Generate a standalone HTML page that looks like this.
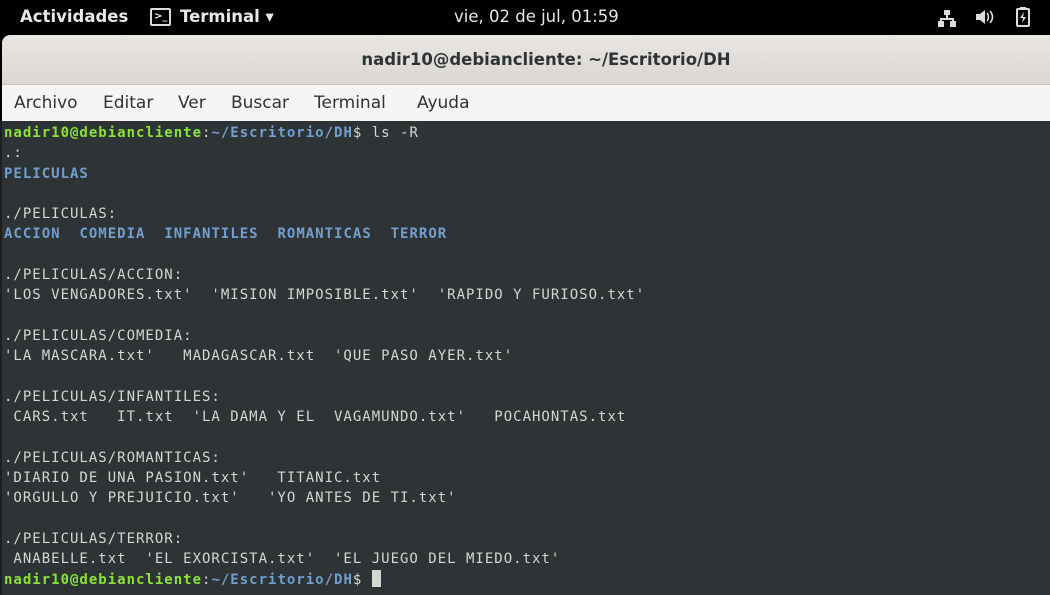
<!DOCTYPE html>
<html><head><meta charset="utf-8"><style>
*{margin:0;padding:0;box-sizing:border-box}
body{width:1050px;height:595px;overflow:hidden;background:#000;font-family:"DejaVu Sans","Liberation Sans",sans-serif;position:relative}
#top{position:absolute;left:0;top:0;width:1050px;height:35px;background:#000;color:#e8e8e8;font-size:16.5px;font-weight:bold}
#top span{position:absolute;top:7px}
#title{position:absolute;left:2px;top:35px;width:1048px;height:50px;background:linear-gradient(#e8e6e3,#dad7d2);border-top-left-radius:8px;border-bottom:1px solid #c9c4bc;text-align:center;font-size:16.5px;font-weight:bold;color:#2e3436;line-height:50px;padding-left:40px}
#menu{position:absolute;left:2px;top:85px;width:1048px;height:36px;background:#f6f5f4;font-size:17px;color:#2e3436}
#menu span{position:absolute;top:8px}
#term{position:absolute;left:0;top:121px;width:1050px;height:474px;background:#2e3436;border-left:2px solid #1d1f21;padding:2px 0 0 2px;font-family:"DejaVu Sans Mono","Liberation Mono",monospace;font-size:14px;letter-spacing:1px;line-height:20.3px;color:#d3d7cf;white-space:pre}
.g{color:#8ae234;font-weight:bold}.b{color:#729fcf;font-weight:bold}
.cur{display:inline-block;width:9px;height:17px;background:#d3d7cf;vertical-align:-3px}
</style></head><body>
<div id="top">
<span style="left:20px">Actividades</span>
<span style="left:150px;top:8px;width:21px;height:18px;border:2px solid #ddd;border-radius:2px;font-size:10px;line-height:13px;padding-left:2px">&gt;_</span>
<span style="left:180px">Terminal ▾</span>
<span style="left:454px;font-weight:normal">vie, 02 de jul, 01:59</span>
<svg style="position:absolute;left:937px;top:8px" width="20" height="20" viewBox="0 0 20 20" fill="#ddd"><rect x="7" y="2" width="6" height="5"/><rect x="9" y="7" width="2" height="3"/><rect x="3" y="10" width="14" height="2"/><rect x="3" y="10" width="2" height="4"/><rect x="15" y="10" width="2" height="4"/><rect x="1" y="13" width="6" height="6"/><rect x="13" y="13" width="6" height="6"/></svg>
<svg style="position:absolute;left:974px;top:7px" width="22" height="20" viewBox="0 0 22 20" fill="#ddd"><path d="M2 7h4l5-4v14l-5-4H2z"/><path d="M13 6q3 4 0 8M16 4q5 6 0 12" stroke="#ddd" stroke-width="1.6" fill="none"/></svg>
<svg style="position:absolute;left:1015px;top:6px" width="16" height="22" viewBox="0 0 16 22"><rect x="2" y="3" width="12" height="17" rx="1" fill="none" stroke="#ddd" stroke-width="2"/><rect x="5" y="1" width="6" height="2" fill="#ddd"/><path d="M9 6l-4 6h3l-1 5 4-6H8z" fill="#ddd"/></svg>
</div>
<div id="title">nadir10@debiancliente: ~/Escritorio/DH</div>
<div id="menu"><span style="left:12px">Archivo</span><span style="left:101px">Editar</span><span style="left:176px">Ver</span><span style="left:229px">Buscar</span><span style="left:312px">Terminal</span><span style="left:415px">Ayuda</span></div>
<div id="term"><span class="g">nadir10@debiancliente</span>:<span class="b">~/Escritorio/DH</span>$ ls -R
.:
<span class="b">PELICULAS</span>

./PELICULAS:
<span class="b">ACCION</span>  <span class="b">COMEDIA</span>  <span class="b">INFANTILES</span>  <span class="b">ROMANTICAS</span>  <span class="b">TERROR</span>

./PELICULAS/ACCION:
'LOS VENGADORES.txt'  'MISION IMPOSIBLE.txt'  'RAPIDO Y FURIOSO.txt'

./PELICULAS/COMEDIA:
'LA MASCARA.txt'   MADAGASCAR.txt  'QUE PASO AYER.txt'

./PELICULAS/INFANTILES:
 CARS.txt   IT.txt  'LA DAMA Y EL  VAGAMUNDO.txt'   POCAHONTAS.txt

./PELICULAS/ROMANTICAS:
'DIARIO DE UNA PASION.txt'   TITANIC.txt
'ORGULLO Y PREJUICIO.txt'   'YO ANTES DE TI.txt'

./PELICULAS/TERROR:
 ANABELLE.txt  'EL EXORCISTA.txt'  'EL JUEGO DEL MIEDO.txt'
<span class="g">nadir10@debiancliente</span>:<span class="b">~/Escritorio/DH</span>$ <span class="cur"></span></div>
</body></html>
